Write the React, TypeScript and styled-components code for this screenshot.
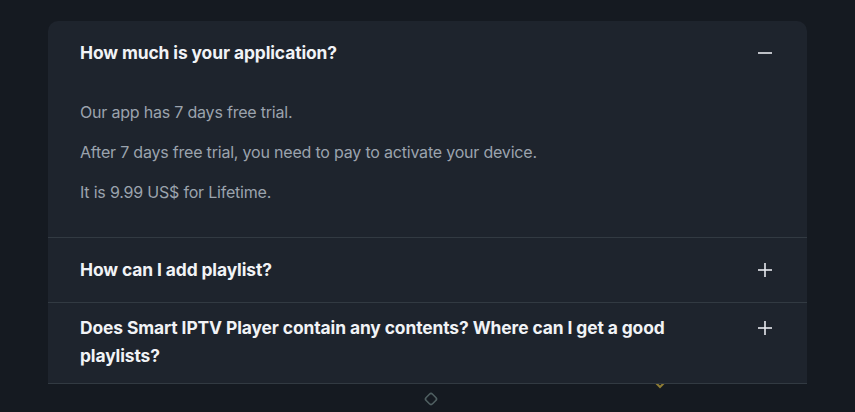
import styled, { createGlobalStyle } from "styled-components"

const GlobalStyle = createGlobalStyle`
    html, body {
        margin: 0;
        padding: 0;
        background: #151a21;
    }
    body {
        font-family: Inter, "Noto Sans", sans-serif;
        -webkit-font-smoothing: antialiased;
    }
`

type Faq = {
    question: string
    answer?: string[]
}

const faqs: Faq[] = [
    {
        question: "How much is your application?",
        answer: [
            "Our app has 7 days free trial.",
            "After 7 days free trial, you need to pay to activate your device.",
            "It is 9.99 US$ for Lifetime.",
        ],
    },
    { question: "How can I add playlist?" },
    { question: "Does Smart IPTV Player contain any contents? Where can I get a good playlists?" },
]

const ToggleIcon = ({ open }: { open: boolean }) => (
    <svg width="16" height="16" viewBox="0 0 16 16" fill="none">
        <path d="M1 8h14" stroke="#e6e9ee" strokeWidth="1.6" />
        {!open && <path d="M8 1v14" stroke="#e6e9ee" strokeWidth="1.6" />}
    </svg>
)

const App = () => {
    return (
        <>
            <GlobalStyle />
            <Page>
                <Card>
                    {faqs.map((item, i) => {
                        const open = !!item.answer
                        const long = item.question.length > 60
                        return (
                            <Item key={i}>
                                <Header $long={long}>
                                    <Question>{item.question}</Question>
                                    <IconWrap>
                                        <ToggleIcon open={open} />
                                    </IconWrap>
                                </Header>
                                {open && (
                                    <Body>
                                        {item.answer!.map((line) => (
                                            <Answer key={line}>{line}</Answer>
                                        ))}
                                    </Body>
                                )}
                            </Item>
                        )
                    })}
                </Card>
                <Chevron width="12" height="10" viewBox="0 0 12 10">
                    <path d="M2 3l4 4 4-4" stroke="#8f7c34" strokeWidth="2" fill="none" />
                </Chevron>
                <Diamond width="16" height="16" viewBox="0 0 16 16">
                    <rect x="3.5" y="3.5" width="9" height="9" rx="2.2" transform="rotate(45 8 8)" stroke="#4f5f61" strokeWidth="1.6" fill="none" />
                </Diamond>
            </Page>
        </>
    )
}

export default App

const Page = styled.div`
    position: relative;
    height: 412px;
    padding: 21px 48px 0;
    box-sizing: border-box;
    overflow: hidden;
`

const Card = styled.div`
    position: relative;
    z-index: 1;
    background: #1e242d;
    border-radius: 10px 10px 0 0;
`

const Item = styled.div`
    border-bottom: 1px solid #323a42;
`

const Header = styled.div<{ $long?: boolean }>`
    display: flex;
    align-items: flex-start;
    justify-content: space-between;
    padding: ${(p) => (p.$long ? "11px" : "18px")} 34px ${(p) => (p.$long ? "13px" : "18px")} 32px;
`

const Question = styled.h3`
    margin: 0;
    max-width: 600px;
    font-size: 17.4px;
    line-height: 28px;
    font-weight: 700;
    letter-spacing: -0.1px;
    color: #f1f3f6;
`

const IconWrap = styled.span`
    display: flex;
    align-items: center;
    height: 28px;
    flex-shrink: 0;
    margin-left: 24px;
`

const Body = styled.div`
    display: flex;
    flex-direction: column;
    gap: 16px;
    padding: 15px 32px 33px;
`

const Answer = styled.p`
    margin: 0;
    font-size: 16px;
    line-height: 24px;
    letter-spacing: -0.2px;
    color: #9ba3ad;
`

const Chevron = styled.svg`
    position: absolute;
    left: 654px;
    top: 380px;
`

const Diamond = styled.svg`
    position: absolute;
    left: 423px;
    top: 391px;
`
